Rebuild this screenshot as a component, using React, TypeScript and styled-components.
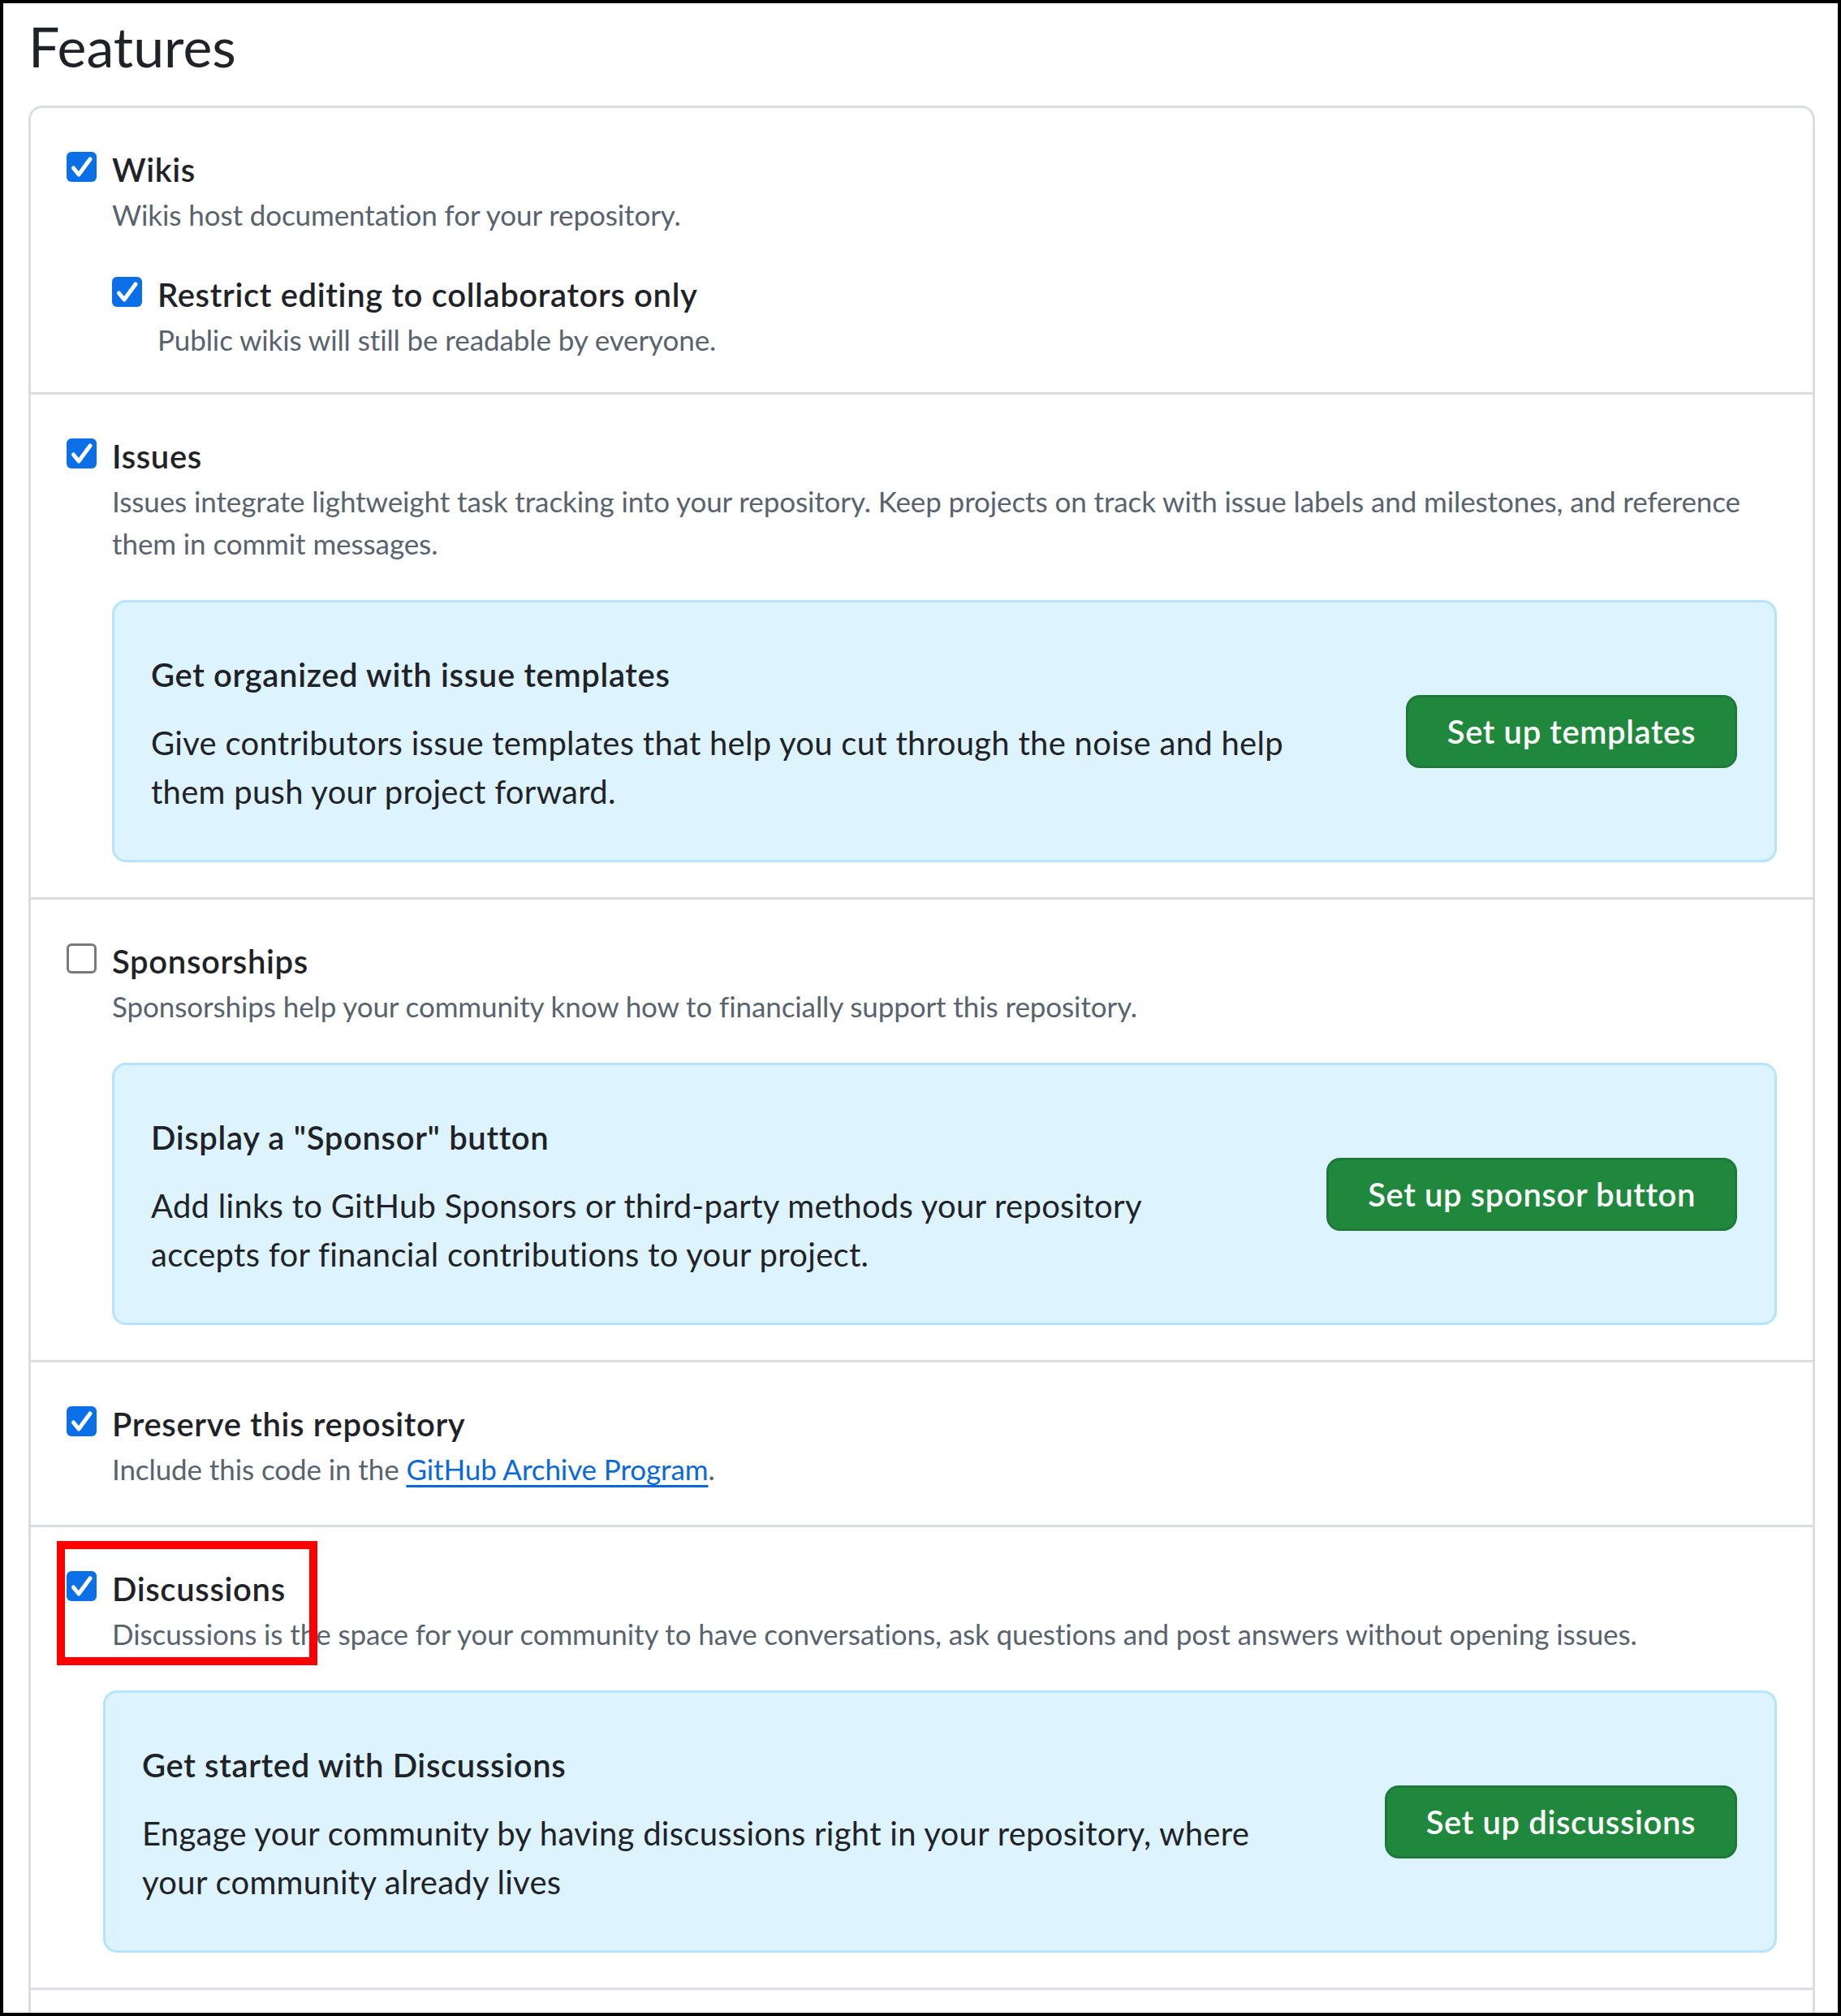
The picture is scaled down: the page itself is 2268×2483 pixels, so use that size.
import React from 'react';
import styled, { createGlobalStyle } from 'styled-components';

const palette = {
  text: '#1f2328',
  muted: '#59636e',
  border: '#d8dee4',
  link: '#0969da',
  check: '#0b6fe8',
  calloutBg: '#ddf4ff',
  calloutBorder: '#b6e3ff',
  green: '#1f883d',
};

const GlobalStyle = createGlobalStyle`
  html, body {
    margin: 0;
    padding: 0;
    background: #fff;
  }
  body {
    font-family: Lato, "Noto Sans", sans-serif;
    color: ${palette.text};
  }
  * {
    box-sizing: border-box;
  }
`;

const Frame = styled.div`
  width: 2268px;
  height: 2483px;
  border: 4px solid #000;
  overflow: hidden;
  padding: 10px 28px 0 31px;
`;

const Heading = styled.h2`
  margin: 0 0 31px;
  font-size: 68px;
  line-height: 85px;
  font-weight: 400;
`;

const Box = styled.div`
  border: 3px solid ${palette.border};
  border-radius: 17px;
`;

const Row = styled.div`
  position: relative;
  display: flex;
  align-items: flex-start;
  gap: 19px;
  padding: 47px 44px 43px 44px;
  & + & {
    border-top: 3px solid ${palette.border};
  }
`;

const SubRow = styled.div`
  display: flex;
  align-items: flex-start;
  gap: 19px;
  margin: 44px 0 -4px;
`;

const Check = styled.span<{ $checked?: boolean }>`
  flex: 0 0 37px;
  width: 37px;
  height: 37px;
  margin-top: 7px;
  border-radius: 6px;
  display: flex;
  align-items: center;
  justify-content: center;
  background: ${(p) => (p.$checked ? palette.check : '#fff')};
  border: ${(p) => (p.$checked ? 'none' : '3px solid #7a7a7a')};
  svg {
    width: 37px;
    height: 37px;
  }
`;

const Body = styled.div`
  flex: 1;
  min-width: 0;
`;

const Label = styled.div`
  font-size: 40px;
  line-height: 58px;
  font-weight: 600;
  letter-spacing: 0.65px;
`;

const Desc = styled.p`
  margin: 0;
  font-size: 35px;
  line-height: 52px;
  letter-spacing: -0.1px;
  color: ${palette.muted};
  a {
    color: ${palette.link};
    text-decoration: underline;
    text-decoration-thickness: 3px;
    text-underline-offset: 6px;
  }
`;

const Callout = styled.div<{ $shift?: number }>`
  margin-top: 44px;
  margin-left: ${(p) => p.$shift || 0}px;
  display: flex;
  align-items: center;
  gap: 60px;
  padding: 57px 46px 57px 45px;
  background: ${palette.calloutBg};
  border: 3px solid ${palette.calloutBorder};
  border-radius: 17px;
`;

const CalloutBody = styled.div`
  flex: 1;
  min-width: 0;
  padding-top: 3px;
  margin-bottom: -3px;
`;

const CalloutTitle = styled.h3`
  margin: 0 0 25px;
  font-size: 40px;
  line-height: 58px;
  font-weight: 600;
  letter-spacing: 0.65px;
`;

const CalloutText = styled.p`
  margin: 0;
  font-size: 40px;
  line-height: 60px;
  letter-spacing: 0.28px;
  white-space: nowrap;
`;

const GreenButton = styled.button`
  flex-shrink: 0;
  height: 90px;
  padding: 0 48px;
  border: 3px solid rgba(31, 35, 40, 0.15);
  border-radius: 17px;
  background: ${palette.green};
  color: #fff;
  font-family: inherit;
  font-size: 40px;
  font-weight: 600;
  letter-spacing: 0.6px;
  cursor: pointer;
`;

const Marker = styled.div`
  position: absolute;
  left: 32px;
  top: 17px;
  width: 321px;
  height: 153px;
  border: 10px solid #ff0000;
  pointer-events: none;
`;

function Checkbox({ checked }: { checked?: boolean }) {
  return (
    <Check $checked={checked}>
      {checked && (
        <svg viewBox="0 0 37 37">
          <polyline points="8.5,20 15,28 29,9" fill="none" stroke="#fff" strokeWidth="5" strokeLinecap="round" strokeLinejoin="round" />
        </svg>
      )}
    </Check>
  );
}

type CalloutProps = {
  title: string;
  lines: string[];
  action: string;
  shift?: number;
};

function SetupCallout({ title, lines, action, shift }: CalloutProps) {
  return (
    <Callout $shift={shift}>
      <CalloutBody>
        <CalloutTitle>{title}</CalloutTitle>
        <CalloutText>
          {lines[0]}
          <br />
          {lines[1]}
        </CalloutText>
      </CalloutBody>
      <GreenButton type="button">{action}</GreenButton>
    </Callout>
  );
}

export default function App() {
  return (
    <>
      <GlobalStyle />
      <Frame>
        <Heading>Features</Heading>
        <Box>
          <Row>
            <Checkbox checked />
            <Body>
              <Label>Wikis</Label>
              <Desc>Wikis host documentation for your repository.</Desc>
              <SubRow>
                <Checkbox checked />
                <Body>
                  <Label>Restrict editing to collaborators only</Label>
                  <Desc>Public wikis will still be readable by everyone.</Desc>
                </Body>
              </SubRow>
            </Body>
          </Row>

          <Row>
            <Checkbox checked />
            <Body>
              <Label>Issues</Label>
              <Desc>
                Issues integrate lightweight task tracking into your repository. Keep projects on track with issue labels and milestones, and reference
                <br />
                them in commit messages.
              </Desc>
              <SetupCallout
                title="Get organized with issue templates"
                lines={['Give contributors issue templates that help you cut through the noise and help', 'them push your project forward.']}
                action="Set up templates"
              />
            </Body>
          </Row>

          <Row>
            <Checkbox />
            <Body>
              <Label>Sponsorships</Label>
              <Desc>Sponsorships help your community know how to financially support this repository.</Desc>
              <SetupCallout
                title={'Display a "Sponsor" button'}
                lines={['Add links to GitHub Sponsors or third-party methods your repository', 'accepts for financial contributions to your project.']}
                action="Set up sponsor button"
              />
            </Body>
          </Row>

          <Row>
            <Checkbox checked />
            <Body>
              <Label>Preserve this repository</Label>
              <Desc>
                Include this code in the <a href="#archive">GitHub Archive Program</a>.
              </Desc>
            </Body>
          </Row>

          <Row>
            <Checkbox checked />
            <Body>
              <Label>Discussions</Label>
              <Desc>Discussions is the space for your community to have conversations, ask questions and post answers without opening issues.</Desc>
              <SetupCallout
                shift={-11}
                title="Get started with Discussions"
                lines={['Engage your community by having discussions right in your repository, where', 'your community already lives']}
                action="Set up discussions"
              />
            </Body>
            <Marker />
          </Row>
          <Row />
        </Box>
      </Frame>
    </>
  );
}
